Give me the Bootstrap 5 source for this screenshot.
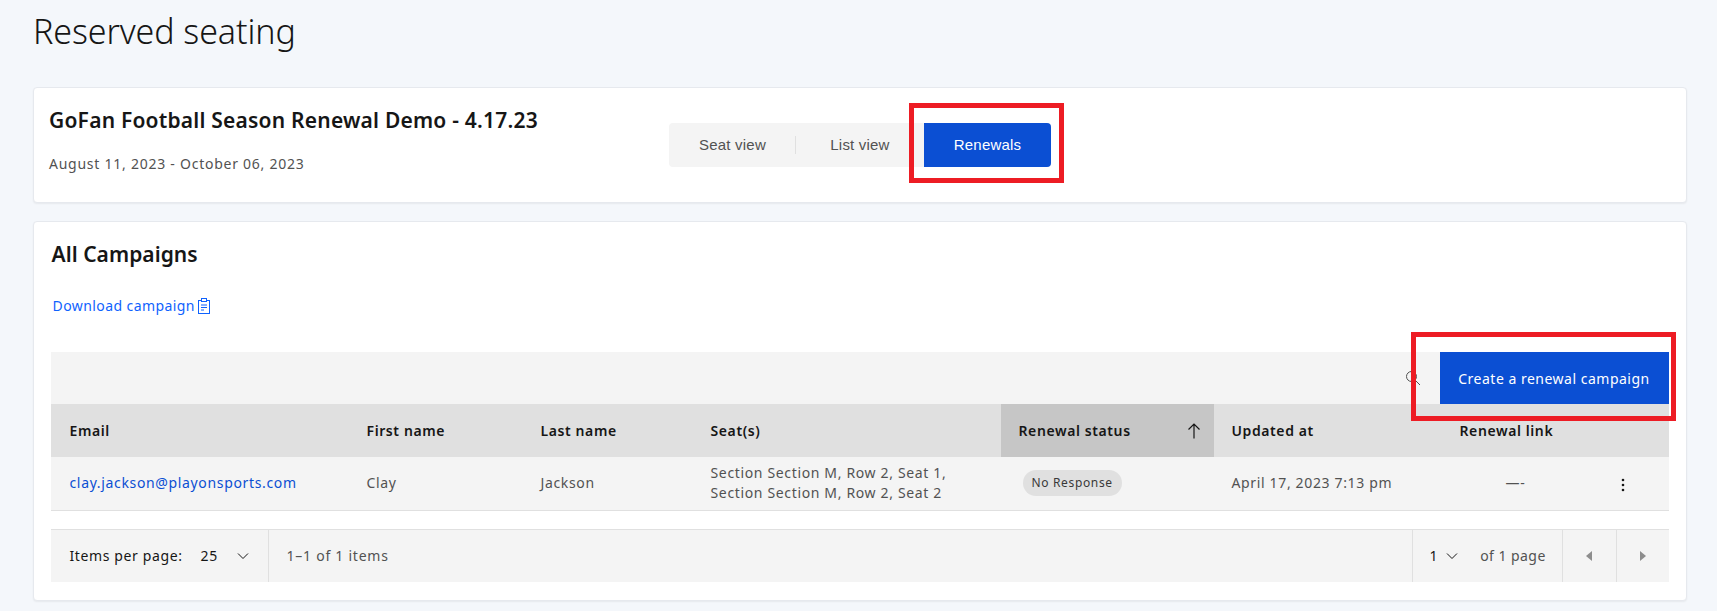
<!DOCTYPE html>
<html lang="en">
<head>
<meta charset="utf-8">
<title>Reserved seating</title>
<link href="https://cdn.jsdelivr.net/npm/bootstrap@5.3.0/dist/css/bootstrap.min.css" rel="stylesheet">
<style>
html,body{height:611px;overflow:hidden}
body{background:#f4f7fb;font-family:"Noto Sans","Liberation Sans",sans-serif;color:#161616;font-size:14px;letter-spacing:.62px}
.page-wrap{padding:0 30px 0 33px}
.page-title{font-size:34px;font-weight:300;line-height:40px;margin:11px 0 37px 0;height:39px;letter-spacing:-.1px}
.panel{background:#fff;border:1px solid #e6e9ee;border-radius:4px;box-shadow:0 1px 2px rgba(0,0,0,.06)}
.panel-event{height:116px;margin-bottom:18px;padding:0 16px 0 15px}
.event-info{width:620px}
.event-name{font-size:21px;font-weight:600;line-height:26px;margin:19px 0 0;letter-spacing:.21px}
.event-date{font-size:14px;color:#525252;margin:21px 0 0;line-height:20px;letter-spacing:.75px}
.seg-wrap{position:relative;margin-top:35px;width:382px;height:44px;background:#f4f4f4;border-radius:4px;font-family:"Liberation Sans",sans-serif;font-size:15px;letter-spacing:.2px;color:#525252}
.seg-item{height:44px;display:flex;align-items:center;justify-content:center}
.seg-a{width:127px;position:relative}
.seg-a::after{content:"";position:absolute;right:0;top:13px;height:18px;width:1px;background:#e0e0e0}
.seg-b{width:128px}
.seg-c{width:127px;background:#0b4fd3;color:#fff;border-radius:0 4px 4px 0}
.red-mark{position:absolute;border:5px solid #ed1c24;pointer-events:none}
.mark-seg{left:240px;top:-20px;width:155px;height:80px}
.mark-create{right:-7px;top:-20px;width:265px;height:89px}
.panel-campaigns{height:380px;padding:0 17.5px 0 16.5px}
.camp-title{font-size:21px;font-weight:600;line-height:26px;margin:19px 0 0 1px;letter-spacing:.05px}
.dl-link{display:inline-flex;align-items:center;gap:3px;color:#0f62fe;text-decoration:none;margin:29px 0 0 2px;line-height:20px;letter-spacing:.42px}
.table-wrap{position:relative;margin-top:36px}
.tool-bar{height:52px;background:#f4f4f4;justify-content:flex-end}
.create-btn{height:52px;width:229px;background:#0b4fd3;color:#fff;border:0;border-radius:0;font-size:14px;padding:0;letter-spacing:.5px}
.search-ico{margin-right:19px}
.data-table{table-layout:fixed;width:100%;margin:0;border-collapse:collapse}
.data-table th{background:#e0e0e0;height:53px;font-weight:600;padding:0 0 0 18px;border:0;vertical-align:middle;color:#161616;font-size:14px;letter-spacing:.6px}
.data-table td{background:#f4f4f4;height:53px;color:#525252;padding:0 0 0 18px;border:0;border-bottom:1px solid #e0e0e0;vertical-align:middle;line-height:20px;letter-spacing:.65px}
.data-table th.sorted{background:#c6c6c6}
.data-table th:first-child,.data-table td:first-child{padding-left:19px}
.data-table td.dash-cell{padding-left:64px}
.sort-row{justify-content:space-between;padding-right:12px}
.mail-link{color:#0b4fd3;text-decoration:none}
.status-pill{display:inline-block;background:#e0e0e0;color:#393939;font-size:12px;line-height:26px;height:26px;padding:0 9px;border-radius:13px;margin-left:4px;letter-spacing:.65px}
.pager{height:53px;margin-top:18px;background:#f4f4f4;border-top:1px solid #e0e0e0;color:#525252}
.pager-cell{height:52px;display:flex;align-items:center;border-right:1px solid #e0e0e0}
.pg-items{width:218px;padding-left:19px;color:#161616}
.pg-num{margin-left:18px}
.pg-chev{margin-left:19px}
.pg-count{padding-left:18px;border:0;flex:1;letter-spacing:.75px}
.pg-left{width:151px;border-left:1px solid #e0e0e0;padding-left:17px}
.pg-chev2{margin-left:8px}
.pg-of{margin-left:22px;letter-spacing:.45px}
.pg-btn{width:54px;justify-content:center}
.pg-last{border:0;width:52px}
.num-dark{color:#161616}
</style>
</head>
<body>
<div class="page-wrap">
  <h1 class="page-title">Reserved seating</h1>

  <div class="panel panel-event d-flex">
    <div class="event-info">
      <h2 class="event-name">GoFan Football Season Renewal Demo - 4.17.23</h2>
      <p class="event-date">August 11, 2023 - October 06, 2023</p>
    </div>
    <div class="seg-wrap d-flex">
      <div class="seg-item seg-a">Seat view</div>
      <div class="seg-item seg-b">List view</div>
      <div class="seg-item seg-c">Renewals</div>
      <div class="red-mark mark-seg"></div>
    </div>
  </div>

  <div class="panel panel-campaigns">
    <h2 class="camp-title">All Campaigns</h2>
    <a class="dl-link" href="#">Download campaign
      <svg width="12" height="16" viewBox="0 0 12 16" fill="none" stroke="#0f62fe" stroke-width="1"><rect x=".5" y="2.500" width="11" height="13"/><rect x="3.500" y=".5" width="5" height="3" fill="#fff"/><path d="M3 7h6M3 9.500h6M3 12h3"/></svg>
    </a>
    <div class="table-wrap">
      <div class="tool-bar d-flex align-items-center">
        <svg class="search-ico" width="16" height="16" viewBox="0 0 16 16" fill="none" stroke="#525252" stroke-width="1"><circle cx="6.500" cy="6.500" r="5"/><path d="M10.200 10.200 15 15"/></svg>
        <button class="btn create-btn" type="button">Create a renewal campaign</button>
      </div>
      <table class="table data-table">
        <colgroup><col style="width:298px"><col style="width:174px"><col style="width:170px"><col style="width:308px"><col style="width:213px"><col style="width:228px"><col style="width:161px"><col></colgroup>
        <thead>
          <tr>
            <th>Email</th><th>First name</th><th>Last name</th><th>Seat(s)</th>
            <th class="sorted"><div class="d-flex align-items-center sort-row"><span>Renewal status</span>
              <svg width="16" height="16" viewBox="0 0 16 16" fill="none" stroke="#161616" stroke-width="1.200"><path d="M8 15.500V1M2.500 6.500 8 1l5.500 5.500"/></svg></div></th>
            <th>Updated at</th><th>Renewal link</th><th></th>
          </tr>
        </thead>
        <tbody>
          <tr>
            <td><a class="mail-link" href="#">clay.jackson@playonsports.com</a></td>
            <td>Clay</td><td>Jackson</td>
            <td>Section Section M, Row 2, Seat 1,<br>Section Section M, Row 2, Seat 2</td>
            <td><span class="status-pill">No Response</span></td>
            <td>April 17, 2023 7:13 pm</td>
            <td class="dash-cell">—-</td>
            <td><svg width="4" height="14" viewBox="0 0 4 14" fill="#161616"><circle cx="2" cy="2" r="1.300"/><circle cx="2" cy="7" r="1.300"/><circle cx="2" cy="12" r="1.300"/></svg></td>
          </tr>
        </tbody>
      </table>
      <div class="red-mark mark-create"></div>
    </div>
    <div class="pager d-flex">
      <div class="pager-cell pg-items">Items per page:<span class="pg-num">25</span>
        <svg class="pg-chev" width="12" height="8" viewBox="0 0 12 8" fill="none" stroke="#161616" stroke-width="1"><path d="M1 1.500 6 6.500l5-5"/></svg></div>
      <div class="pager-cell pg-count">1–1 of 1 items</div>
      <div class="pager-cell pg-left"><span class="num-dark">1</span>
        <svg class="pg-chev2" width="12" height="8" viewBox="0 0 12 8" fill="none" stroke="#161616" stroke-width="1"><path d="M1 1.500 6 6.500l5-5"/></svg><span class="pg-of">of 1 page</span></div>
      <div class="pager-cell pg-btn"><svg width="6" height="10" viewBox="0 0 6 10" fill="#8d8d8d"><path d="M6 0v10L0 5z"/></svg></div>
      <div class="pager-cell pg-btn pg-last"><svg width="6" height="10" viewBox="0 0 6 10" fill="#8d8d8d"><path d="M0 0v10l6-5z"/></svg></div>
    </div>
  </div>
</div>
</body>
</html>
